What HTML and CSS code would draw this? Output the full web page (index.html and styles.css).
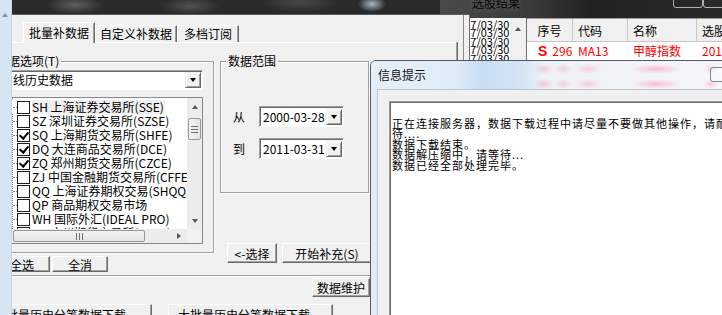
FILE: index.html
```html
<!DOCTYPE html>
<html lang="zh-CN">

<head>
    <meta charset="UTF-8">
    <title>批量补数据</title>
    <link rel="stylesheet" href="styles.css">
</head>

<body>
    <div class="desktop">

        <!-- window behind: stock picking results -->
        <div class="win stock">
            <div class="stock-title">
                <span class="stock-caption">选股结果</span>
                <span class="cap-btn cap-a"></span>
                <span class="cap-btn cap-b"></span>
            </div>
            <div class="stock-body">
                <div class="date-col">
                    <div>2017/03/30</div>
                    <div>2017/03/30</div>
                    <div>2017/03/30</div>
                    <div>2017/03/30</div>
                    <div>2017/03/30</div>
                </div>
                <div class="mini-scroll"><i class="arr arr-up"></i></div>
                <div class="grid">
                    <div class="grid-head">
                        <div class="cell c1 mid">序号</div>
                        <div class="cell c2">代码</div>
                        <div class="cell c3">名称</div>
                        <div class="cell c4">选股日期</div>
                    </div>
                    <div class="grid-row">
                        <div class="cell c1"><b class="sig">S</b>296</div>
                        <div class="cell c2">MA13</div>
                        <div class="cell c3">甲醇指数</div>
                        <div class="cell c4">2017/03/30</div>
                    </div>
                </div>
            </div>
        </div>

        <!-- batch data dialog -->
        <div class="win main">
            <div class="tabs">
                <div class="tab active" style="width: 72px;">批量补数据</div>
                <div class="tab" style="width: 82px;">自定义补数据</div>
                <div class="tab" style="width: 62px;">多档订阅</div>
            </div>
            <div class="panel">
                <div class="col-left">
                    <fieldset class="group opts">
                        <legend>数据选项(T)</legend>
                        <div class="combo">
                            <span class="field-text">日线历史数据</span>
                            <span class="drop"><i class="arr arr-down"></i></span>
                        </div>
                        <div class="tree">
                            <ul class="tree-items">
                                <li class="sel"><span class="chk"></span>SH 上海证券交易所(SSE)</li>
                                <li><span class="chk"></span>SZ 深圳证券交易所(SZSE)</li>
                                <li><span class="chk on"></span>SQ 上海期货交易所(SHFE)</li>
                                <li><span class="chk on"></span>DQ 大连商品交易所(DCE)</li>
                                <li><span class="chk on"></span>ZQ 郑州期货交易所(CZCE)</li>
                                <li><span class="chk"></span>ZJ 中国金融期货交易所(CFFEX)</li>
                                <li><span class="chk"></span>QQ 上海证券期权交易(SHQQ)</li>
                                <li><span class="chk"></span>QP 商品期权交易市场</li>
                                <li><span class="chk"></span>WH 国际外汇(IDEAL PRO)</li>
                                <li><span class="chk"></span>GZ 广州期货交易所(GFEX)</li>
                            </ul>
                            <div class="vbar">
                                <span class="sb-btn"><i class="arr arr-up"></i></span>
                                <span class="vthumb"><i class="grip-h"></i></span>
                                <span class="sb-fill"></span>
                                <span class="sb-btn"><i class="arr arr-down-g"></i></span>
                            </div>
                            <div class="hbar">
                                <span class="hthumb"><i class="grip-v"></i></span>
                                <span class="sb-fill"></span>
                                <span class="sb-btn"><i class="arr arr-right"></i></span>
                            </div>
                            <div class="corner"></div>
                        </div>
                    </fieldset>
                    <div class="btn-row sel-row">
                        <button class="btn">全选</button>
                        <button class="btn">全消</button>
                    </div>
                </div>
                <div class="col-right">
                    <fieldset class="group range">
                        <legend>数据范围</legend>
                        <div class="date-row">
                            <span class="lbl">从</span>
                            <div class="datefield">
                                <span class="field-text">2000-03-28</span>
                                <span class="drop"><i class="arr arr-down"></i></span>
                            </div>
                        </div>
                        <div class="date-row">
                            <span class="lbl">到</span>
                            <div class="datefield">
                                <span class="field-text">2011-03-31</span>
                                <span class="drop"><i class="arr arr-down"></i></span>
                            </div>
                        </div>
                    </fieldset>
                    <div class="btn-row act-row">
                        <button class="btn" style="width: 50px;">&lt;-选择</button>
                        <button class="btn" style="width: 90px;">开始补充(S)</button>
                    </div>
                </div>
            </div>
            <div class="maint-row">
                <button class="btn">数据维护</button>
            </div>
            <div class="dl-row">
                <button class="btn dl" style="width: 156px;">批量历史分笔数据下载</button>
                <button class="btn dl" style="width: 165px;">大批量历史分笔数据下载</button>
            </div>
        </div>

        <!-- progress message window -->
        <div class="win info">
            <div class="info-title">
                信息提示
                <span class="cap-btn cap-c"></span>
            </div>
            <div class="info-client">
                <div class="log">
                    <div>&nbsp;</div>
                    <div>正在连接服务器，数据下载过程中请尽量不要做其他操作，请耐心等</div>
                    <div>待....</div>
                    <div>数据下载结束。</div>
                    <div>数据解压缩中，请等待...</div>
                    <div>数据已经全部处理完毕。</div>
                </div>
            </div>
        </div>

        <div class="side-strip"><i class="side-arrow"></i></div>
    </div>
</body>

</html>
```

FILE: styles.css
```css
* {
    box-sizing: border-box;
}

body {
    margin: 0;
    font-family: "Noto Sans CJK SC", sans-serif;
    font-size: 12px;
    color: #000;
    background: #1d1d1d;
}

.desktop {
    position: relative;
    width: 722px;
    height: 315px;
    overflow: hidden;
    background:
        radial-gradient(ellipse 28px 9px at 75px 5px, rgba(140, 140, 140, 0.55), transparent),
        radial-gradient(ellipse 30px 9px at 190px 6px, rgba(120, 120, 120, 0.5), transparent),
        radial-gradient(ellipse 40px 10px at 300px 2px, rgba(90, 90, 90, 0.6), transparent),
        radial-gradient(ellipse 14px 8px at 372px 4px, rgba(200, 220, 235, 0.8), transparent),
        linear-gradient(#2b2b2b, #161616);
}

.win {
    position: absolute;
}

/* ---------- arrows ---------- */

.arr {
    display: block;
    width: 0;
    height: 0;
    border-style: solid;
    border-color: transparent;
}

.arr-up {
    border-width: 0 3.5px 4px;
    border-bottom-color: #555;
}

.arr-down {
    border-width: 4px 3.5px 0;
    border-top-color: #000;
}

.arr-down-g {
    border-width: 4px 3.5px 0;
    border-top-color: #555;
}

.arr-right {
    border-width: 3.5px 0 3.5px 4px;
    border-left-color: #555;
}

/* ---------- stock result window ---------- */

.stock {
    left: 440px;
    top: -10px;
    width: 290px;
    height: 80px;
    background: #333;
}

.stock-title {
    position: relative;
    height: 28px;
    padding-left: 32px;
    line-height: 26px;
    background: linear-gradient(90deg, #4a4a4a, #3a3a3a 90px, #222 150px, #2a2a2a);
}

.stock-caption {
    color: #050505;
    text-shadow: 0 0 6px rgba(255, 255, 255, 0.25);
}

.cap-btn {
    position: absolute;
    border: 1px solid rgba(220, 220, 220, 0.75);
    border-radius: 3px;
}

.cap-a {
    left: 233px;
    top: -6px;
    width: 30px;
    height: 24px;
}

.cap-b {
    left: 263px;
    top: -6px;
    width: 30px;
    height: 24px;
}

.stock-body {
    display: flex;
    height: 52px;
}

.date-col {
    flex-shrink: 0;
    width: 70px;
    padding: 2px 0 0 12px;
    background: #fff;
    font-size: 11px;
    line-height: 8.4px;
    white-space: nowrap;
    overflow: hidden;
}

.mini-scroll {
    flex-shrink: 0;
    width: 17px;
    padding: 9px 0 0 5px;
    background: #f0f0f0;
    border-right: 1px solid #6d6d6d;
}

.grid {
    flex: 1;
    min-width: 0;
    overflow: hidden;
    background: #fff;
    border-top: 1px solid #9b9b9b;
}

.grid-head,
.grid-row {
    display: flex;
    white-space: nowrap;
}

.grid-head {
    height: 23px;
    line-height: 23px;
    background: #f0f0f0;
    border-bottom: 1px solid #c8c8c8;
}

.grid-head .cell {
    border-right: 1px solid #c9c9c9;
}

.grid-row {
    height: 18px;
    line-height: 18px;
    color: #f00;
}

.cell {
    padding-left: 5px;
    flex-shrink: 0;
}

.cell.mid {
    padding-left: 0;
    text-align: center;
}

.c1 {
    width: 46px;
}

.c2 {
    width: 55px;
}

.c3 {
    width: 69px;
}

.c4 {
    width: 80px;
}

.grid-row .c1 {
    padding-left: 11px;
}

.sig {
    font-family: "Liberation Sans", sans-serif;
    font-size: 14px;
    margin-right: 5px;
}

/* ---------- main dialog ---------- */

.main {
    left: -20px;
    top: 14px;
    width: 490px;
    height: 320px;
    background: #f0f0f0;
    border-top: 1px solid #5c5c5c;
    border-right: 1px solid #6e6e6e;
    box-shadow: inset -5px 0 0 #f0f0f0, inset -6px 0 0 #8a8a8a;
}

.tabs {
    display: flex;
    align-items: flex-end;
    height: 20px;
    margin-top: 7px;
    padding-left: 43px;
}

.tab {
    height: 17px;
    line-height: 16px;
    text-align: center;
    border-top: 1px solid #fff;
    border-left: 1px solid #fff;
    border-right: 1px solid #696969;
    box-shadow: inset -1px 0 0 #a0a0a0;
    white-space: nowrap;
}

.tab.active {
    position: relative;
    z-index: 1;
    height: 21px;
    line-height: 19px;
    margin-bottom: -1px;
    background: #f0f0f0;
}

.panel {
    display: flex;
    width: 477px;
    height: 234px;
    padding: 12px 0 0 8px;
    border-top: 1px solid #fff;
    border-right: 1px solid #a0a0a0;
    border-bottom: 1px solid #a0a0a0;
    box-shadow: 1px 0 0 #696969, 0 1px 0 #fff;
}

.group {
    margin: 0;
    padding: 0;
    min-width: 0;
    border: 1px solid #a0a0a0;
    box-shadow: inset 1px 1px 0 #fff, 1px 1px 0 #fff;
}

.group legend {
    margin-left: 5px;
    padding: 0 2px;
    line-height: 12px;
}

.col-left {
    width: 226px;
    flex-shrink: 0;
}

.opts {
    width: 226px;
    height: 198px;
    padding-top: 3px;
}

.combo,
.datefield {
    display: flex;
    align-items: center;
    justify-content: space-between;
    background: #fff;
    border-top: 1px solid #a0a0a0;
    border-left: 1px solid #a0a0a0;
    border-right: 1px solid #fff;
    border-bottom: 1px solid #fff;
    box-shadow: inset 1px 1px 0 #696969;
}

.combo {
    width: 206px;
    height: 20px;
    margin-left: 8px;
}

.field-text {
    padding-left: 3px;
    line-height: 16px;
    white-space: nowrap;
}

.drop {
    display: flex;
    align-items: center;
    justify-content: center;
    width: 16px;
    height: 16px;
    margin-right: 1px;
    background: #f0f0f0;
    border-top: 1px solid #f0f0f0;
    border-left: 1px solid #f0f0f0;
    border-right: 1px solid #696969;
    border-bottom: 1px solid #696969;
    box-shadow: inset 1px 1px 0 #fff, inset -1px -1px 0 #a0a0a0;
}

/* tree list with checkboxes */

.tree {
    display: grid;
    grid-template-columns: 1fr 15px;
    grid-template-rows: 1fr 14px;
    width: 206px;
    height: 147px;
    margin: 7px 0 0 8px;
    background: #fff;
    border: 1px solid #828790;
}

.tree-items {
    position: relative;
    margin: 0;
    padding: 2px 0 0;
    list-style: none;
    overflow: hidden;
    white-space: nowrap;
}

.tree-items::before {
    content: "";
    position: absolute;
    left: 14px;
    top: 0;
    bottom: 0;
    border-left: 1px dotted #8c8c8c;
}

.tree-items li {
    position: relative;
    display: flex;
    align-items: center;
    height: 14px;
    line-height: 14px;
    padding-left: 19px;
}

.tree-items li::before {
    content: "";
    position: absolute;
    left: 15px;
    top: 7px;
    width: 4px;
    border-top: 1px dotted #8c8c8c;
}

.tree-items li.sel {
    background: linear-gradient(90deg, #fff 34px, #f0f0f0 34px, #f0f0f0 167px, #fff 167px);
}

.chk {
    position: relative;
    width: 13px;
    height: 13px;
    margin-right: 2px;
    border: 1px solid #1c1c1c;
    background: #fff;
    flex-shrink: 0;
}

.chk.on::after {
    content: "";
    position: absolute;
    left: 3px;
    top: 0;
    width: 4px;
    height: 7px;
    border-right: 2px solid #000;
    border-bottom: 2px solid #000;
    transform: rotate(40deg);
}

.vbar {
    display: flex;
    flex-direction: column;
    background: #ececec;
}

.hbar {
    display: flex;
    align-items: stretch;
    background: #ececec;
}

.sb-btn {
    display: flex;
    align-items: center;
    justify-content: center;
    height: 17px;
    flex-shrink: 0;
}

.hbar .sb-btn {
    width: 17px;
    height: auto;
}

.sb-fill {
    flex: 1;
}

.vthumb {
    display: flex;
    align-items: center;
    justify-content: center;
    height: 22px;
    margin: 3px 1px 0;
    background: linear-gradient(90deg, #f4f4f4, #e4e4e4);
    border: 1px solid #979797;
    border-radius: 2px;
}

.hthumb {
    display: flex;
    align-items: center;
    justify-content: center;
    width: 132px;
    margin: 1px 0 1px 15px;
    background: linear-gradient(#f4f4f4, #e4e4e4);
    border: 1px solid #979797;
    border-radius: 2px;
}

.grip-h {
    width: 7px;
    height: 7px;
    background: repeating-linear-gradient(#707070 0 1px, transparent 1px 3px);
}

.grip-v {
    width: 7px;
    height: 7px;
    background: repeating-linear-gradient(90deg, #707070 0 1px, transparent 1px 3px);
}

.corner {
    background: #f0f0f0;
}

/* buttons */

.btn {
    display: block;
    margin: 0;
    padding: 0;
    font: inherit;
    color: #000;
    background: #f0f0f0;
    border-top: 1px solid #fff;
    border-left: 1px solid #fff;
    border-right: 1px solid #696969;
    border-bottom: 1px solid #696969;
    box-shadow: inset -1px -1px 0 #a0a0a0;
    white-space: nowrap;
}

.btn-row {
    display: flex;
}

.sel-row {
    gap: 2px;
    margin: 3px 0 0 6px;
}

.sel-row .btn {
    width: 56px;
    height: 16px;
    line-height: 13px;
}

.col-right {
    width: 170px;
    margin-left: 6px;
    flex-shrink: 0;
}

.range {
    width: 149px;
    height: 138px;
    padding-top: 39px;
}

.date-row {
    display: flex;
    align-items: center;
    height: 21px;
    padding-left: 12px;
}

.date-row + .date-row {
    margin-top: 11px;
}

.lbl {
    width: 12px;
    margin-right: 14px;
}

.datefield {
    width: 85px;
    height: 21px;
}

.act-row {
    gap: 5px;
    margin: 50px 0 0 7px;
}

.act-row .btn {
    height: 20px;
    line-height: 17px;
}

.maint-row {
    margin-top: 2px;
    padding-left: 332px;
}

.maint-row .btn {
    width: 58px;
    height: 19px;
    line-height: 16px;
}

.dl-row {
    display: flex;
    gap: 16px;
    margin-top: 7px;
    padding-left: 16px;
}

.dl {
    height: 22px;
    padding-left: 9px;
    text-align: left;
    line-height: 14px;
}

/* ---------- info window ---------- */

.info {
    left: 370px;
    top: 60px;
    width: 362px;
    height: 262px;
    background: #e4ebf2;
    border: 1px solid #4f5b68;
    border-radius: 6px 6px 0 0;
}

.info-title {
    position: relative;
    height: 28px;
    padding-left: 7px;
    line-height: 28px;
    color: #111;
    border-radius: 5px 5px 0 0;
    background:
        radial-gradient(ellipse 10px 5px at 173px 8px, rgba(255, 120, 150, 0.35), transparent),
        radial-gradient(ellipse 9px 5px at 192px 8px, rgba(255, 120, 150, 0.3), transparent),
        radial-gradient(ellipse 14px 5px at 217px 8px, rgba(255, 120, 150, 0.3), transparent),
        radial-gradient(ellipse 26px 5px at 285px 8px, rgba(255, 110, 150, 0.4), transparent),
        radial-gradient(ellipse 8px 5px at 340px 8px, rgba(255, 120, 150, 0.3), transparent),
        radial-gradient(ellipse 10px 5px at 173px 23px, rgba(255, 120, 150, 0.35), transparent),
        radial-gradient(ellipse 9px 5px at 192px 23px, rgba(255, 120, 150, 0.3), transparent),
        radial-gradient(ellipse 14px 5px at 217px 23px, rgba(255, 120, 150, 0.3), transparent),
        radial-gradient(ellipse 26px 5px at 285px 23px, rgba(255, 110, 150, 0.4), transparent),
        radial-gradient(ellipse 8px 5px at 340px 23px, rgba(255, 120, 150, 0.3), transparent),
        linear-gradient(90deg, #e4eff9 0, #dfecf7 85px, #c8def1 110px, #d4e5f3 150px, #eef2f8 175px, #f6f5f9 100%);
}

.cap-c {
    left: 339px;
    top: 6px;
    width: 26px;
    height: 15px;
    border-color: #7b8794;
    background: rgba(255, 255, 255, 0.4);
}

.info-client {
    height: 240px;
    margin-left: 6px;
    padding: 11px 0 0 11px;
    background: #f0f0f0;
    border-top: 1px solid #b9c4cf;
    border-left: 1px solid #b9c4cf;
}

.log {
    height: 220px;
    padding: 5px 0 0 2px;
    background: #fff;
    border-top: 1px solid #a0a0a0;
    border-left: 1px solid #a0a0a0;
    box-shadow: inset 1px 1px 0 #696969;
    font-size: 11px;
    letter-spacing: 1px;
    line-height: 10.5px;
    white-space: nowrap;
    overflow: hidden;
}

/* ---------- left edge strip ---------- */

.side-strip {
    position: absolute;
    left: 0;
    top: 0;
    width: 12px;
    height: 315px;
    padding: 13px 0 0 2px;
    background: #d7e4f2;
    border-right: 1px solid #c9d6e4;
}

.side-arrow {
    display: block;
    width: 0;
    height: 0;
    border-style: solid;
    border-color: transparent;
    border-width: 0 3.5px 4px;
    border-bottom-color: #8193a8;
}
```
